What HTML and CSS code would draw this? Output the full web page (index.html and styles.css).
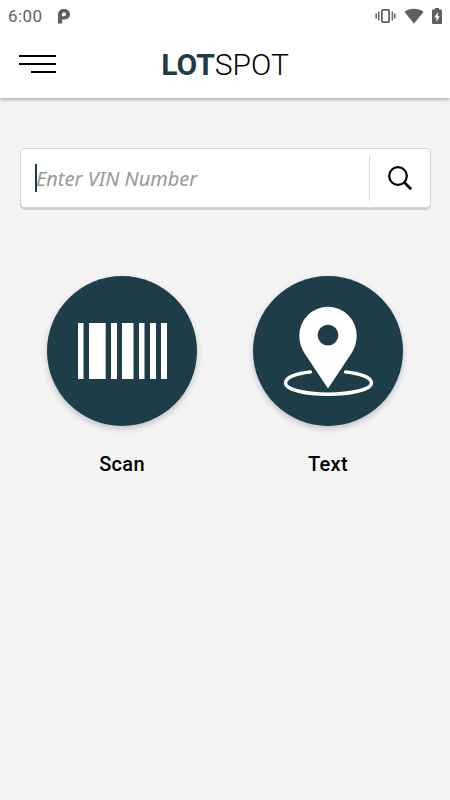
FILE: index.html
```html
<!DOCTYPE html>
<html lang="en">
<head>
    <meta charset="UTF-8">
    <meta name="viewport" content="width=device-width, initial-scale=1.0">
    <title>LOTSPOT</title>
    <link rel="stylesheet" href="styles.css">
</head>
<body>
    <header class="header">
        <!-- Status bar -->
        <div class="status-bar">
            <span class="time">6:00</span>
            <svg class="p-icon" width="14" height="16" viewBox="0 0 14 16">
                <path d="M1 15.5V6.2C1 3 3.6 1 7 1s6 2 6 5.2-2.500 5.200-5.600 5.200H5.200V15.500z" fill="#5f5f5f"/>
                <path d="M5 8V6.200a2 2 0 1 1 2 2H5z" fill="#fff"/>
            </svg>
            <div class="status-icons">
                <svg width="21" height="16" viewBox="0 0 21 16" fill="none" stroke="#5f5f5f">
                    <rect x="6.900" y="1.900" width="7.200" height="12.200" rx="1" stroke-width="1.800"/>
                    <path d="M3.700 3.500v9M17.300 3.500v9" stroke-width="1.500"/>
                    <path d="M1.200 5.500v5M19.800 5.500v5" stroke-width="1.500"/>
                </svg>
                <svg class="wifi" width="20" height="16" viewBox="0 0 20 16">
                    <path d="M10 15.500L.5 4C3 2 6.500.800 10 .800S17 2 19.500 4z" fill="#5f5f5f"/>
                </svg>
                <svg class="battery" width="10" height="16" viewBox="0 0 10 16">
                    <path d="M3 0h4v1.600h2q1 0 1 1V15q0 1-1 1H1q-1 0-1-1V2.600q0-1 1-1h2z" fill="#5f5f5f"/>
                    <path d="M5.700 4L2.300 9.500h2.200V14l3.200-5.800H5.700z" fill="#fff"/>
                </svg>
            </div>
        </div>

        <!-- Title bar -->
        <div class="nav-bar">
            <button class="menu-btn" aria-label="Menu">
                <span></span>
                <span></span>
                <span class="short"></span>
            </button>
            <h1 class="logo"><b>LOT</b>SPOT</h1>
        </div>
    </header>

    <main>
        <div class="search-box">
            <span class="cursor"></span>
            <span class="placeholder">Enter VIN Number</span>
            <button class="search-btn" aria-label="Search">
                <svg width="26" height="26" viewBox="0 0 26 26" fill="none" stroke="#000">
                    <circle cx="11" cy="11" r="8.800" stroke-width="2.200"/>
                    <path d="M17.200 17.200l7 7" stroke-width="2.700"/>
                </svg>
            </button>
        </div>

        <div class="actions">
            <div class="action">
                <button class="circle" aria-label="Scan">
                    <svg width="150" height="150" viewBox="0 0 150 150" fill="#fff">
                        <rect x="31" y="47" width="5.500" height="56"/>
                        <rect x="42" y="47" width="16.700" height="56"/>
                        <rect x="64" y="47" width="6" height="56"/>
                        <rect x="75" y="47" width="11.500" height="56"/>
                        <rect x="92" y="47" width="5.500" height="56"/>
                        <rect x="103" y="47" width="6" height="56"/>
                        <rect x="114" y="47" width="6" height="56"/>
                    </svg>
                </button>
                <span class="label">Scan</span>
            </div>
            <div class="action">
                <button class="circle" aria-label="Text">
                    <svg width="150" height="150" viewBox="0 0 150 150">
                        <path fill="#fff" fill-rule="evenodd" d="M75 112.500L52 78C48 72 46.300 66 46.300 59.500a28.700 28.700 0 0 1 57.400 0C103.700 66 102 72 98 78zM75 48.700a10.400 10.400 0 1 0 0 20.800 10.400 10.400 0 0 0 0-20.800z"/>
                        <path fill="none" stroke="#fff" stroke-width="3.500" stroke-linecap="round" d="M57.500 96C43 97.300 32.500 101.500 32.500 107c0 6.500 19 11.200 42.500 11.200s43.500-4.700 43.500-11.200c0-5.500-11.500-9.700-26-11"/>
                    </svg>
                </button>
                <span class="label">Text</span>
            </div>
        </div>
    </main>
</body>
</html>
```
FILE: styles.css
```css
* {
    box-sizing: border-box;
}
body {
    margin: 0;
    min-height: 100vh;
    background-color: #f4f4f4;
    font-family: Roboto, sans-serif;
    color: #000;
}
button {
    border: none;
    padding: 0;
    background: none;
    cursor: pointer;
}
svg {
    display: block;
}
.header {
    height: 98px;
    background-color: #fff;
    box-shadow: 0 1px 4px rgba(0, 0, 0, 0.4);
}

/* Status bar */
.status-bar {
    display: flex;
    align-items: center;
    height: 30px;
    padding: 1px 8px 0;
}
.time {
    width: 49px;
    font-size: 17px;
    letter-spacing: 0.4px;
    color: #5f5f5f;
}
.status-icons {
    display: flex;
    align-items: center;
    margin-left: auto;
}
.wifi {
    margin-left: 8px;
}
.battery {
    margin-left: 8px;
}

/* Title bar */
.nav-bar {
    display: grid;
    grid-template-columns: 38px 1fr 38px;
    align-items: center;
    height: 68px;
    padding: 0 18px;
}
.menu-btn {
    display: flex;
    flex-direction: column;
    align-items: flex-end;
    gap: 6px;
}
.menu-btn span {
    width: 37px;
    height: 2px;
    background-color: #000;
}
.menu-btn .short {
    width: 25px;
}
.logo {
    margin: 0;
    font-size: 30px;
    font-weight: 300;
    text-align: center;
}
.logo b {
    font-weight: 700;
    color: #1d3d49;
}

/* VIN search */
.search-box {
    display: flex;
    align-items: center;
    height: 60px;
    margin: 50px 19px 0 20px;
    padding-left: 14px;
    background-color: #fff;
    border: 1px solid #d8d8d8;
    border-radius: 5px;
    box-shadow: 0 2px 1px rgba(0, 0, 0, 0.15);
}
.cursor {
    width: 2px;
    height: 28px;
    background-color: #1d3d49;
}
.placeholder {
    margin-left: -1px;
    font-family: "Noto Sans", sans-serif;
    font-size: 20px;
    font-style: italic;
    color: #999;
}
.search-btn {
    display: flex;
    align-items: center;
    justify-content: center;
    width: 61px;
    height: 45px;
    margin-left: auto;
    border-left: 1px solid #d8d8d8;
}

/* Round buttons */
.actions {
    display: flex;
    justify-content: center;
    gap: 56px;
    margin-top: 68px;
}
.action {
    display: flex;
    flex-direction: column;
    align-items: center;
}
.circle {
    width: 150px;
    height: 150px;
    border-radius: 50%;
    background-color: #1d3d49;
    box-shadow: 0 3px 6px rgba(0, 0, 0, 0.2);
}
.label {
    margin-top: 26px;
    font-size: 20px;
    font-weight: 500;
    letter-spacing: 0.3px;
}
```
